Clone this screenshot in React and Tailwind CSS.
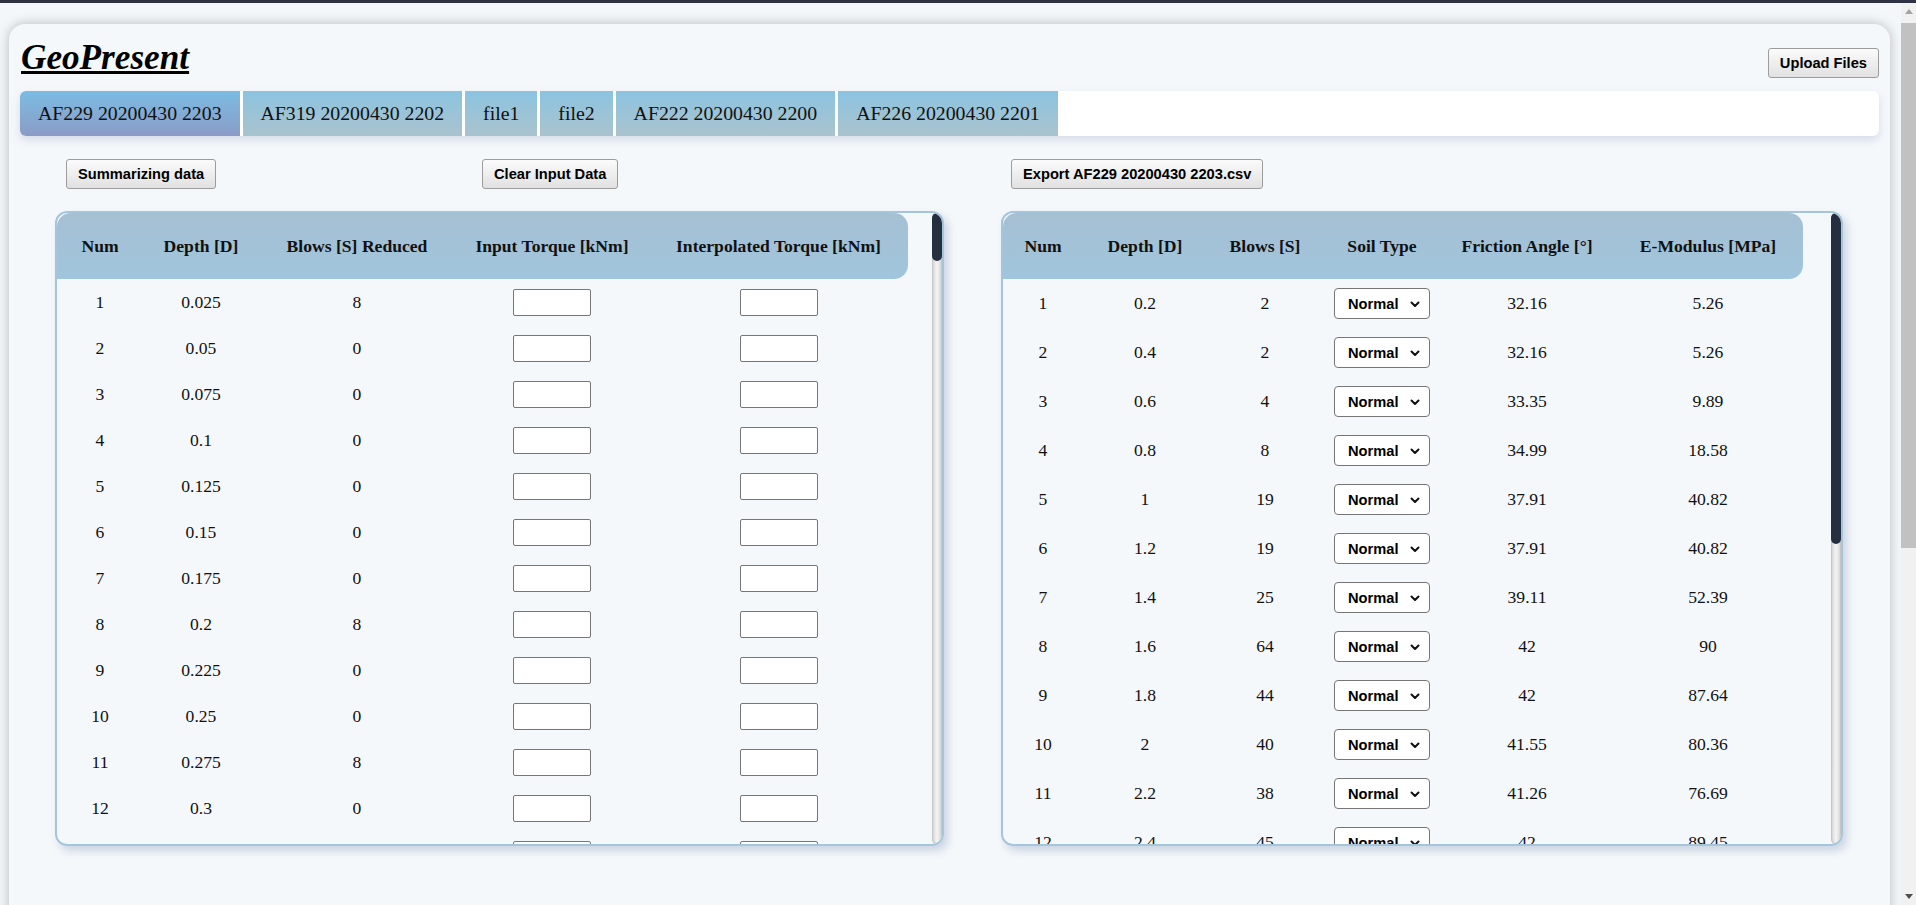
import React from 'react';

const LEFT_COLS = [86, 116, 196, 194, 259];
const RIGHT_COLS = [80, 124, 116, 118, 172, 190];

const TABS = ['AF229 20200430 2203', 'AF319 20200430 2202', 'file1', 'file2', 'AF222 20200430 2200', 'AF226 20200430 2201'];

const LEFT_BLOWS = [8, 0, 0, 0, 0, 0, 0, 8, 0, 0, 8, 0];
const leftRows = Array.from({ length: 14 }, (_, i) => ({
  num: i + 1,
  depth: String(Number(((i + 1) * 0.025).toFixed(3))),
  blows: i < LEFT_BLOWS.length ? LEFT_BLOWS[i] : 0,
}));

const RIGHT_SEED = [
  [2, 32.16, 5.26], [2, 32.16, 5.26], [4, 33.35, 9.89], [8, 34.99, 18.58],
  [19, 37.91, 40.82], [19, 37.91, 40.82], [25, 39.11, 52.39], [64, 42, 90],
  [44, 42, 87.64], [40, 41.55, 80.36], [38, 41.26, 76.69], [45, 42, 89.45],
  [41, 41.69, 82.19],
];
const rightRows = RIGHT_SEED.map(([blows, phi, e], i) => ({
  num: i + 1, depth: String(Number(((i + 1) * 0.2).toFixed(1))), blows, phi, e,
}));

function GreyButton({ children, className = '' }) {
  return (
    <button className={`h-[30px] px-[11px] rounded-[3px] border border-[#9c9c9c] bg-linear-to-b from-[#fbfbfb] to-[#e1e1e1] font-['Liberation_Sans',Arial,sans-serif] text-[14.67px] font-bold text-black whitespace-nowrap ${className}`}>
      {children}
    </button>
  );
}

function Tab({ label, active }) {
  return (
    <div className={`flex items-center h-full px-[18px] mr-[3px] text-[19.8px] text-[#111] whitespace-nowrap ${active
      ? 'rounded-l-[6px] bg-linear-to-b from-[#7abce3] to-[#8a9bc6]'
      : 'bg-linear-to-b from-[#8bc3e0] to-[#aac3ce]'}`}>
      {label}
    </div>
  );
}

function HeaderRow({ labels }) {
  return (
    <tr>
      {labels.map((l, i) => (
        <th
          key={l}
          className={`h-[66px] p-0 font-bold text-[17.6px] text-[#111] text-center align-middle bg-linear-to-b from-[#a6bfd3] to-[#a0c5dc] ${i === 0 ? 'rounded-tl-[14px]' : ''} ${i === labels.length - 1 ? 'rounded-tr-[14px] rounded-br-[14px]' : ''}`}
        >
          {l}
        </th>
      ))}
    </tr>
  );
}

function Chevron() {
  return (
    <svg width="12" height="12" viewBox="0 0 12 12" className="absolute right-[9px] top-[10px] pointer-events-none">
      <path d="M2.5 4.5 6 8l3.5-3.5" fill="none" stroke="#111" strokeWidth="2" strokeLinecap="round" strokeLinejoin="round" />
    </svg>
  );
}

// browser-style page scrollbar drawn at the right edge
function PageScrollbar() {
  return (
    <div className="w-[15px] shrink-0 h-[902px] bg-[#f1f1f1] flex flex-col">
      <div className="h-[17px] flex items-center justify-center">
        <svg width="8" height="5" viewBox="0 0 8 5"><path d="M0 5 4 0l4 5z" fill="#a3a3a3" /></svg>
      </div>
      <div className="mt-[3px] h-[525px] bg-[#c1c1c1]" />
      <div className="flex-1" />
      <div className="h-[17px] flex items-center justify-center">
        <svg width="8" height="5" viewBox="0 0 8 5"><path d="M0 0h8L4 5z" fill="#505050" /></svg>
      </div>
    </div>
  );
}

// thin custom scrollbar of the table panels
function PanelScrollbar({ thumb }) {
  return (
    <div className="w-[10px] shrink-0 h-full rounded-[5px] bg-linear-to-r from-[#d4d4d4] via-[#f4f4f4] to-[#d4d4d4] shadow-[inset_0_0_2px_rgba(0,0,0,0.3)]">
      <div className="rounded-[5px] bg-[#252f40]" style={{ height: thumb }} />
    </div>
  );
}

function Panel({ thumb, children }) {
  return (
    <div className="mt-[22px] h-[635px] flex border-2 border-[#a4c6dd] rounded-[12px] shadow-[4px_5px_8px_rgba(110,130,170,0.3)] overflow-hidden">
      <div className="flex-1 min-w-0 overflow-hidden">{children}</div>
      <PanelScrollbar thumb={thumb} />
    </div>
  );
}

export default function App() {
  return (
    <div className="h-[905px] overflow-hidden bg-[#f4f7fa] font-['Liberation_Serif','Times_New_Roman',serif]">
      <div className="h-[3px] bg-[#2f3242]" />
      <div className="flex h-[902px]">
        <div className="flex-1 min-w-0 overflow-hidden">
          <div className="pt-[21px] pb-[20px] pl-[9px] pr-[11px]">
            <div className="min-h-[1910px] rounded-t-[16px] bg-[#f5f8fb] shadow-[0_0_12px_rgba(0,0,0,0.25)] px-[11px]">
              <div className="flex justify-between items-start pt-[14px]">
                <h1 className="text-[35.2px] leading-[39px] font-bold italic underline text-black ml-[1px]">GeoPresent</h1>
                <GreyButton className="mt-[10px] px-[10px]">Upload Files</GreyButton>
              </div>

              <div className="mt-[13px] h-[45px] flex bg-white rounded-[6px] shadow-[0_4px_8px_rgba(120,135,180,0.25)]">
                {TABS.map((t, i) => <Tab key={t} label={t} active={i === 0} />)}
              </div>

              <div className="flex mt-[23px]">
                <div className="ml-[35px] w-[889px]">
                  <div className="flex">
                    <div className="w-[427px] pl-[11px]">
                      <GreyButton>Summarizing data</GreyButton>
                    </div>
                    <GreyButton>Clear Input Data</GreyButton>
                  </div>
                  <Panel thumb={48}>
                    <table className="table-fixed border-separate border-spacing-0 w-[851px]">
                      <colgroup>
                        {LEFT_COLS.map((w, i) => <col key={i} style={{ width: w }} />)}
                      </colgroup>
                      <thead>
                        <HeaderRow labels={['Num', 'Depth [D]', 'Blows [S] Reduced', 'Input Torque [kNm]', 'Interpolated Torque [kNm]']} />
                      </thead>
                      <tbody>
                        {leftRows.map(r => (
                          <tr key={r.num} className="h-[46px] text-[17.6px] text-[#111] text-center">
                            <td>{r.num}</td>
                            <td>{r.depth}</td>
                            <td>{r.blows}</td>
                            <td><input type="text" className="w-[78px] h-[27px] bg-white border border-[#767676] rounded-[2px] align-middle" /></td>
                            <td><input type="text" className="w-[78px] h-[27px] bg-white border border-[#767676] rounded-[2px] align-middle" /></td>
                          </tr>
                        ))}
                      </tbody>
                    </table>
                  </Panel>
                </div>

                <div className="ml-[57px] w-[842px]">
                  <div className="pl-[10px]">
                    <GreyButton>Export AF229 20200430 2203.csv</GreyButton>
                  </div>
                  <Panel thumb={331}>
                    <table className="table-fixed border-separate border-spacing-0 w-[800px]">
                      <colgroup>
                        {RIGHT_COLS.map((w, i) => <col key={i} style={{ width: w }} />)}
                      </colgroup>
                      <thead>
                        <HeaderRow labels={['Num', 'Depth [D]', 'Blows [S]', 'Soil Type', 'Friction Angle [°]', 'E-Modulus [MPa]']} />
                      </thead>
                      <tbody>
                        {rightRows.map(r => (
                          <tr key={r.num} className="h-[49px] text-[17.6px] text-[#111] text-center">
                            <td>{r.num}</td>
                            <td>{r.depth}</td>
                            <td>{r.blows}</td>
                            <td>
                              <div className="relative inline-block align-middle">
                                <select defaultValue="Normal" className="appearance-none w-[96px] h-[31px] pl-[13px] pr-[22px] bg-white border border-[#767676] rounded-[4px] font-['Liberation_Sans',Arial,sans-serif] text-[14.67px] font-bold text-black text-left">
                                  <option>Normal</option>
                                  <option>Loose</option>
                                  <option>Dense</option>
                                </select>
                                <Chevron />
                              </div>
                            </td>
                            <td>{r.phi}</td>
                            <td>{r.e}</td>
                          </tr>
                        ))}
                      </tbody>
                    </table>
                  </Panel>
                </div>
              </div>
            </div>
          </div>
        </div>
        <PageScrollbar />
      </div>
    </div>
  );
}
